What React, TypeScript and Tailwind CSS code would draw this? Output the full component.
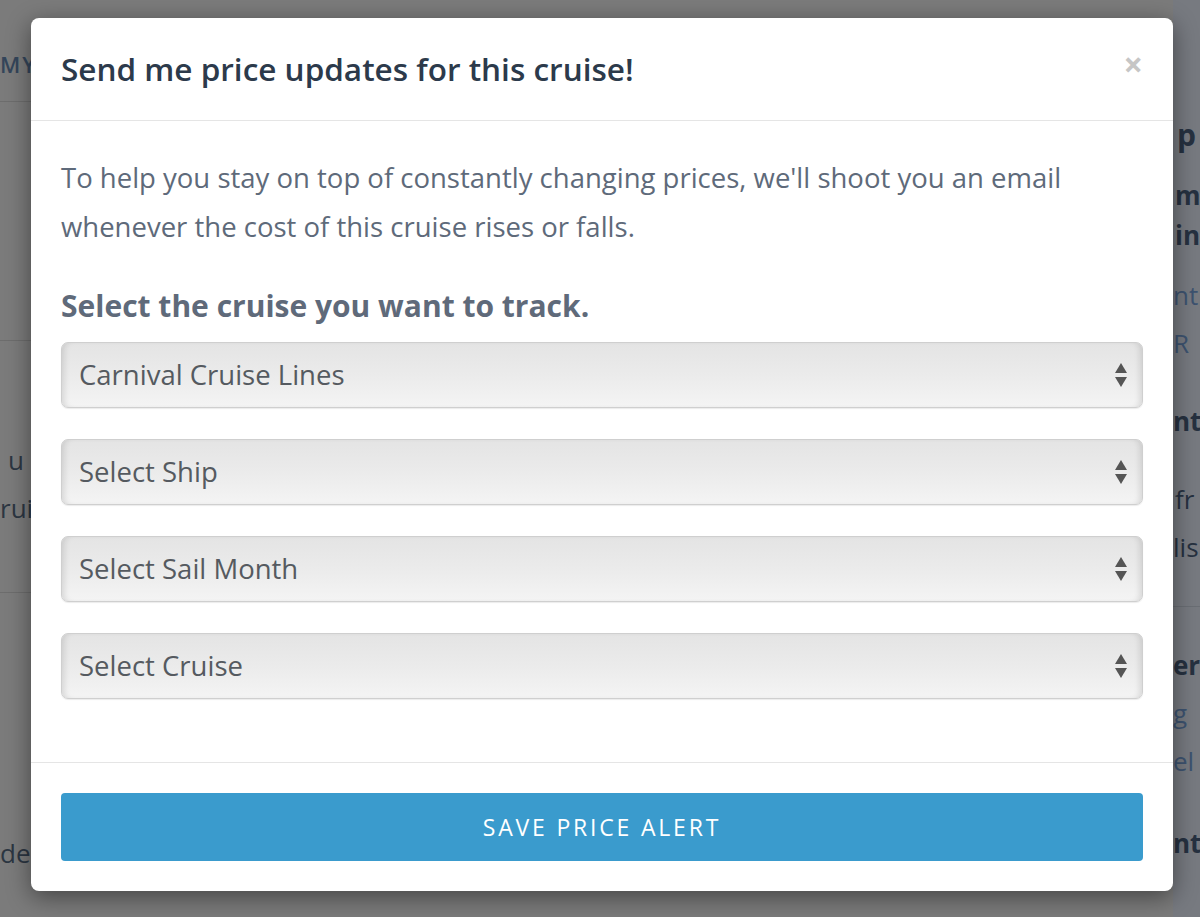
import React from "react";

const font = { fontFamily: '"Open Sans", "Noto Sans", sans-serif' };

function Arrows() {
  return (
    <svg width="14" height="26" viewBox="0 0 14 26" className="shrink-0">
      <path d="M7 1 L13 11 L1 11 Z" fill="#555" />
      <path d="M1 15 L13 15 L7 25 Z" fill="#555" />
    </svg>
  );
}

function FakeSelect({ label }: { label: string }) {
  return (
    <div className="flex h-[66px] items-center justify-between rounded-[7px] border border-[#cfcfcf] bg-gradient-to-b from-[#e4e4e4] via-[#ebebeb] to-[#f4f4f4] pl-[17px] pr-[14px] shadow-[inset_6px_0_6px_-4px_rgba(0,0,0,0.12),inset_-6px_0_6px_-4px_rgba(0,0,0,0.12),0_1px_1px_rgba(0,0,0,0.08)]">
      <span className="text-[27.5px] text-[#555a60]">{label}</span>
      <Arrows />
    </div>
  );
}

export default function App() {
  return (
    <div className="relative h-[917px] w-[1200px] overflow-hidden bg-[#7b7b7b]" style={font}>
      {/* dimmed background page */}
      <div className="flex h-full w-full">
        <div className="flex w-[60px] flex-col text-[#2c3642]">
          <div className="mt-[48px] text-[22px] font-semibold tracking-[2px] text-[#34455a]">MY</div>
          <div className="mt-[20px] h-px bg-[#6d6d6d]" />
          <div className="mt-[238px] h-px bg-[#6d6d6d]" />
          <div className="mt-[95px] pl-[8px] text-[26px] leading-[48px]">u</div>
          <div className="pl-[0px] text-[26px] leading-[48px]">rui</div>
          <div className="mt-[60px] h-px bg-[#6d6d6d]" />
          <div className="mt-[240px] text-[26px] leading-[40px]">de</div>
        </div>
        <div className="flex-1" />
        <div className="flex w-[27px] flex-col overflow-hidden bg-[#777a80] text-[26px] text-[#263140]">
          <div className="mt-[115px] pl-[4px] text-[30px] font-bold leading-[40px]">p</div>
          <div className="mt-[20px] pl-[2px] font-bold leading-[40px]">m</div>
          <div className="pl-[2px] font-bold leading-[40px]">in</div>
          <div className="mt-[16px] leading-[48px] text-[#3d5370]">nt</div>
          <div className="leading-[48px] text-[#3d5370]">R</div>
          <div className="mt-[30px] font-bold leading-[48px]">nt</div>
          <div className="mt-[30px] pl-[2px] leading-[48px]">fr</div>
          <div className="leading-[48px]">lis</div>
          <div className="mt-[35px] h-px bg-[#6a6e74]" />
          <div className="mt-[34px] font-bold leading-[48px]">er</div>
          <div className="leading-[48px] text-[#3d5370]">g</div>
          <div className="leading-[48px] text-[#3d5370]">el</div>
          <div className="mt-[34px] font-bold leading-[48px]">nt</div>
        </div>
      </div>

      {/* modal */}
      <div className="absolute left-[31px] top-[18px] flex h-[873px] w-[1142px] flex-col rounded-[8px] bg-white shadow-[0_6px_24px_rgba(0,0,0,0.45)]">
        <div className="flex h-[103px] shrink-0 items-center justify-between border-b border-[#e5e5e5] pl-[30px] pr-[30px]">
          <h1 className="text-[31.5px] font-semibold text-[#2c3a4b]">Send me price updates for this cruise!</h1>
          <span className="-mt-[10px] text-[34px] font-bold leading-none text-[#c6c6c6]">×</span>
        </div>
        <div className="flex flex-1 flex-col px-[30px] pt-[32px]">
          <p className="text-[27.5px] leading-[49px] text-[#5e6a7a]">
            To help you stay on top of constantly changing prices, we'll shoot you an email whenever the cost of this cruise rises or falls.
          </p>
          <h2 className="mt-[35px] text-[30px] font-bold leading-[40px] text-[#5f6a7a]">Select the cruise you want to track.</h2>
          <div className="mt-[16px] flex flex-col gap-[31px]">
            <FakeSelect label="Carnival Cruise Lines" />
            <FakeSelect label="Select Ship" />
            <FakeSelect label="Select Sail Month" />
            <FakeSelect label="Select Cruise" />
          </div>
        </div>
        <div className="flex h-[129px] shrink-0 flex-col border-t border-[#e5e5e5] px-[30px] pt-[30px]">
          <div className="flex h-[68px] items-center justify-center rounded-[4px] bg-[#3a9bcd]">
            <span className="text-[23px] font-medium tracking-[2.8px] text-white">SAVE PRICE ALERT</span>
          </div>
        </div>
      </div>
    </div>
  );
}
